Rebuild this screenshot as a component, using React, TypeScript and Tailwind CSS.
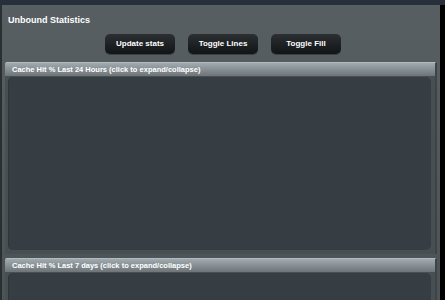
import React from "react";

const font = { fontFamily: '"Liberation Sans", Arial, sans-serif' };

function Button({ label }: { label: string }) {
  return (
    <button className="w-[70px] h-[20px] rounded-[5px] bg-gradient-to-b from-[#2c3033] to-[#121517] text-white text-[8px] font-bold shadow-[0_1px_0_#3a4043]">
      {label}
    </button>
  );
}

function Section({ title }: { title: string }) {
  return (
    <div className="flex flex-col shrink-0">
      {/* header bar */}
      <div className="h-[14px] shrink-0 flex items-center pl-[7px] bg-gradient-to-b from-[#a1aaaf] to-[#6d7579] border-t border-[#b3bbc0] border-r-2 border-r-[#3d4447] text-white text-[7.5px] font-bold rounded-tl-[2px]">
        {title}
      </div>
      {/* body */}
      <div className="shrink-0 bg-[#474f53] pl-[3px] pr-[4px] pt-[1px] pb-[4px] border-r-2 border-r-[#3d4447]">
        <div className="h-[173px] bg-[#363d43] rounded-[5px] border-l border-[#2f3539]" />
      </div>
    </div>
  );
}

export default function App() {
  return (
    <div className="w-[445px] h-[300px] overflow-hidden bg-black flex flex-col" style={font}>
      <div className="h-[5px] bg-[#27303a] shrink-0" />
      <div className="flex flex-1 min-h-0">
        <div className="w-[2px] shrink-0 bg-[#2a2f32]" />
        <div className="w-[438px] shrink-0 bg-gradient-to-b from-[#575f63] to-[#4b5357] px-[3px] flex flex-col">
          <div className="h-[29px] shrink-0 flex items-start pt-[9px] pl-[3px] text-white text-[9px] font-bold">
            Unbound Statistics
          </div>
          <div className="flex shrink-0 justify-center gap-[13px] pl-[4px]">
            <Button label="Update stats" />
            <Button label="Toggle Lines" />
            <Button label="Toggle Fill" />
          </div>
          <div className="h-[8px] shrink-0" />
          <Section title="Cache Hit % Last 24 Hours (click to expand/collapse)" />
          <div className="h-[4px] shrink-0" />
          <Section title="Cache Hit % Last 7 days (click to expand/collapse)" />
        </div>
      </div>
    </div>
  );
}
